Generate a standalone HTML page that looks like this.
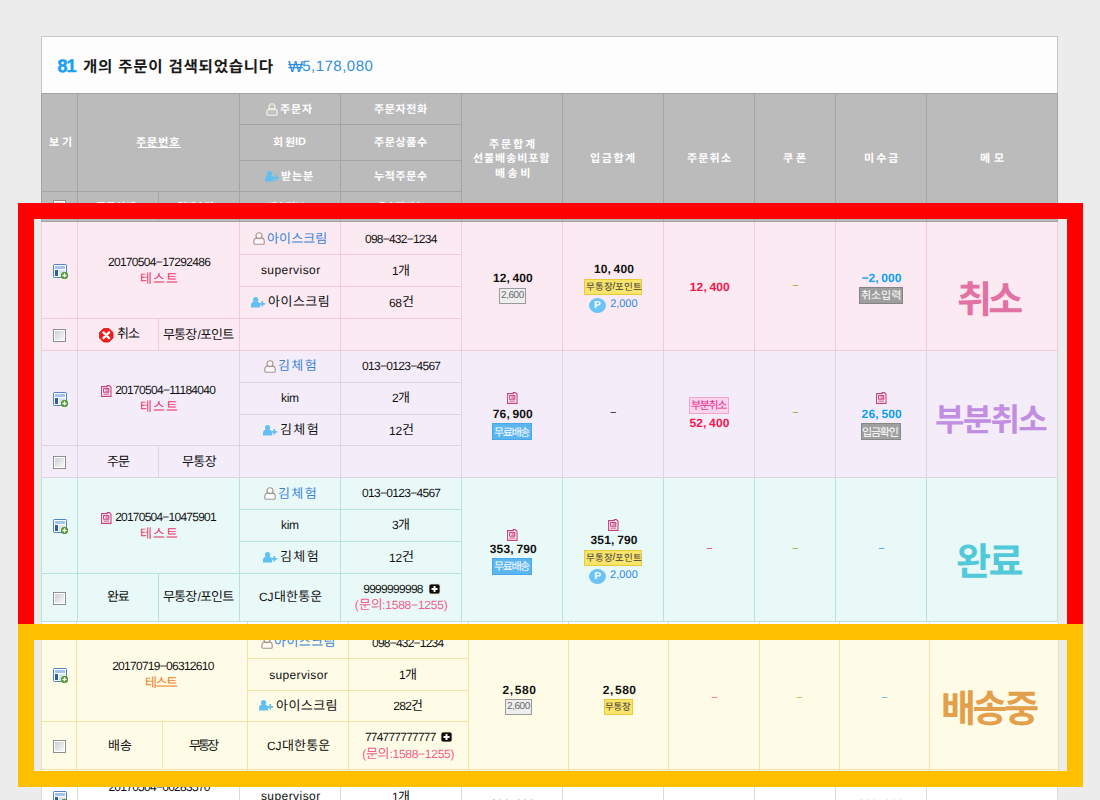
<!DOCTYPE html>
<html lang="ko"><head><meta charset="utf-8"><title>주문리스트</title>
<style>
html,body{margin:0;padding:0}
body{width:1100px;height:800px;overflow:hidden;background:#ececec;position:relative;font-family:"Liberation Sans",sans-serif;text-rendering:geometricPrecision}
.r,.t,.h,.cb,.pc,.fr,.clip{position:absolute}
.t{line-height:1;white-space:nowrap}
.t i{font-style:normal}
.h{overflow:visible}
svg.h text{font-family:"Liberation Sans","Noto Sans CJK KR","NanumGothic",sans-serif}
.cb{width:13px;height:13px;box-sizing:border-box;border:1px solid #8f8f8f;box-shadow:inset 0 0 0 1px #fff;background:linear-gradient(135deg,#ccd0d6 10%,#f6f6f6 85%)}
.pc{width:17px;height:15px;border-radius:50%;background:#6cc4f4;color:#fff;font-size:10px;font-weight:bold;line-height:15px;text-align:center}
.fr{box-sizing:border-box;border:16px solid}
.clip{overflow:hidden}
.clip>div{position:absolute}
</style></head>
<body>
<div id="shotA">
<div class="r" style="left:41px;top:36px;width:1017px;height:770px;background:#fdfdfd;box-sizing:border-box;border:1px solid #c6c6c6;border-bottom:0;"></div>
<span class="t" style="-webkit-text-stroke:.5px #1ba1f2;left:57.43px;top:57px;font-size:18px;color:#1ba1f2;letter-spacing:-0.95px;font-weight:bold;">81</span>
<svg class="h" style="left:82.59px;top:54.16px" width="192.23" height="22.4"><text x="0" y="17.6" font-size="15.6" font-weight="bold" fill="#1a1a1a" textLength="190.2" lengthAdjust="spacing">개의 주문이 검색되었습니다</text></svg>
<svg class="h" style="left:287.99px;top:52.89px" width="16.23" height="24.36"><text x="0" y="19.14" font-size="16" fill="#2f8fd8">₩</text></svg>
<span class="t" style="left:302.22px;top:59px;font-size:15px;color:#2f8fd8;letter-spacing:0.48px;">5,178,080</span>
<div class="r" style="left:41px;top:93px;width:1017px;height:129px;background:#bbbbbb;"></div>
<div class="r" style="left:41px;top:93px;width:1px;height:129px;background:#a4a4a4;"></div>
<div class="r" style="left:77px;top:93px;width:1px;height:129px;background:#a4a4a4;"></div>
<div class="r" style="left:239px;top:93px;width:1px;height:129px;background:#a4a4a4;"></div>
<div class="r" style="left:340px;top:93px;width:1px;height:129px;background:#a4a4a4;"></div>
<div class="r" style="left:461px;top:93px;width:1px;height:129px;background:#a4a4a4;"></div>
<div class="r" style="left:562px;top:93px;width:1px;height:129px;background:#a4a4a4;"></div>
<div class="r" style="left:663px;top:93px;width:1px;height:129px;background:#a4a4a4;"></div>
<div class="r" style="left:754px;top:93px;width:1px;height:129px;background:#a4a4a4;"></div>
<div class="r" style="left:835px;top:93px;width:1px;height:129px;background:#a4a4a4;"></div>
<div class="r" style="left:926px;top:93px;width:1px;height:129px;background:#a4a4a4;"></div>
<div class="r" style="left:1057px;top:93px;width:1px;height:129px;background:#a4a4a4;"></div>
<div class="r" style="left:41px;top:93px;width:1017px;height:1px;background:#a4a4a4;"></div>
<div class="r" style="left:41px;top:221px;width:1017px;height:1px;background:#a4a4a4;"></div>
<div class="r" style="left:239px;top:124px;width:222px;height:1px;background:#a4a4a4;"></div>
<div class="r" style="left:239px;top:160px;width:222px;height:1px;background:#a4a4a4;"></div>
<div class="r" style="left:41px;top:191px;width:420px;height:1px;background:#a4a4a4;"></div>
<div class="r" style="left:158px;top:191px;width:1px;height:31px;background:#a4a4a4;"></div>
<svg class="h" style="left:48.99px;top:132.94px" width="25.1" height="16.63"><text x="0" y="13.07" font-size="11" font-weight="bold" fill="#fff" textLength="23.1" lengthAdjust="spacing">보기</text></svg>
<svg class="h" style="left:136.48px;top:132.95px" width="45.37" height="16.63"><text x="0" y="13.07" font-size="11" font-weight="bold" fill="#fff" textLength="43.4" lengthAdjust="spacing">주문번호</text></svg>
<div class="r" style="left:137.5px;top:147px;width:43px;height:1px;background:#fff;"></div>
<svg class="h" style="left:266.3px;top:103.2px" width="12" height="13" viewBox="0 0 12 13"><path d="M.8 11.2V9.2a3.3 3.3 0 0 1 3.3-3.3h3.8a3.3 3.3 0 0 1 3.3 3.3v2a1 1 0 0 1-1 1H1.8a1 1 0 0 1-1-1z" fill="rgba(255,255,255,.12)" stroke="#f6f1e6" stroke-width="1.15"/><circle cx="6" cy="3.7" r="3" fill="rgba(255,255,255,.12)" stroke="#f6f1e6" stroke-width="1.15"/></svg>
<svg class="h" style="left:279.98px;top:100.39px" width="33.98" height="16.63"><text x="0" y="13.07" font-size="11" font-weight="bold" fill="#fff" textLength="32" lengthAdjust="spacing">주문자</text></svg>
<svg class="h" style="left:272.7px;top:132.8px" width="24.24" height="16.63"><text x="0" y="13.07" font-size="11" font-weight="bold" fill="#fff" textLength="22.2" lengthAdjust="spacing">회원</text></svg>
<span class="t" style="left:294.94px;top:137px;font-size:11px;color:#fff;letter-spacing:0.12px;font-weight:bold;">ID</span>
<svg class="h" style="left:265.2px;top:170.6px" width="15" height="11" viewBox="0 0 15 11"><circle cx="4.6" cy="2.7" r="2.6" fill="#62bff2"/><path d="M0 10.4V8.2a3.4 3.4 0 0 1 3.4-3.4h2.4a3.4 3.4 0 0 1 3.4 3.4v2.2z" fill="#62bff2"/><path d="M11.3 4v5.6M8.5 6.8h5.6" stroke="#62bff2" stroke-width="1.7"/></svg>
<svg class="h" style="left:281.11px;top:167.33px" width="34.1" height="16.63"><text x="0" y="13.07" font-size="11" font-weight="bold" fill="#fff" textLength="32.1" lengthAdjust="spacing">받는분</text></svg>
<svg class="h" style="left:373.98px;top:100.4px" width="55.03" height="16.63"><text x="0" y="13.07" font-size="11" font-weight="bold" fill="#fff" textLength="53" lengthAdjust="spacing">주문자전화</text></svg>
<svg class="h" style="left:373.98px;top:132.79px" width="55.16" height="16.63"><text x="0" y="13.07" font-size="11" font-weight="bold" fill="#fff" textLength="53.2" lengthAdjust="spacing">주문상품수</text></svg>
<svg class="h" style="left:373.99px;top:167.2px" width="55.15" height="16.63"><text x="0" y="13.07" font-size="11" font-weight="bold" fill="#fff" textLength="53.2" lengthAdjust="spacing">누적주문수</text></svg>
<svg class="h" style="left:488.98px;top:135.45px" width="48.03" height="16.63"><text x="0" y="13.07" font-size="11" font-weight="bold" fill="#fff" textLength="46" lengthAdjust="spacing">주문합계</text></svg>
<svg class="h" style="left:473.45px;top:149.45px" width="78.36" height="16.63"><text x="0" y="13.07" font-size="11" font-weight="bold" fill="#fff" textLength="76.4" lengthAdjust="spacing">선불배송비포함</text></svg>
<svg class="h" style="left:494.51px;top:163.7px" width="37.3" height="16.63"><text x="0" y="13.07" font-size="11" font-weight="bold" fill="#fff" textLength="35.3" lengthAdjust="spacing">배송비</text></svg>
<svg class="h" style="left:590.39px;top:149.2px" width="47.15" height="16.63"><text x="0" y="13.07" font-size="11" font-weight="bold" fill="#fff" textLength="45.2" lengthAdjust="spacing">입금합계</text></svg>
<svg class="h" style="left:686.98px;top:149.2px" width="46.04" height="16.63"><text x="0" y="13.07" font-size="11" font-weight="bold" fill="#fff" textLength="44" lengthAdjust="spacing">주문취소</text></svg>
<svg class="h" style="left:782.99px;top:149.04px" width="25.24" height="16.63"><text x="0" y="13.07" font-size="11" font-weight="bold" fill="#fff" textLength="23.2" lengthAdjust="spacing">쿠폰</text></svg>
<svg class="h" style="left:864.11px;top:149.2px" width="36.35" height="16.63"><text x="0" y="13.07" font-size="11" font-weight="bold" fill="#fff" textLength="34.4" lengthAdjust="spacing">미수금</text></svg>
<svg class="h" style="left:979.91px;top:149.2px" width="26.21" height="16.63"><text x="0" y="13.07" font-size="11" font-weight="bold" fill="#fff" textLength="24.2" lengthAdjust="spacing">메모</text></svg>
<div class="cb" style="left:53px;top:200px"></div>
<svg class="h" style="left:95.98px;top:197.58px" width="41.69" height="16.63"><text x="0" y="13.07" font-size="11" font-weight="bold" fill="#fff" textLength="39.7" lengthAdjust="spacing">주문상태</text></svg>
<svg class="h" style="left:176.87px;top:197.6px" width="39.37" height="16.63"><text x="0" y="13.07" font-size="11" font-weight="bold" fill="#fff" textLength="37.4" lengthAdjust="spacing">결제수단</text></svg>
<svg class="h" style="left:266.51px;top:197.6px" width="40" height="16.63"><text x="0" y="13.07" font-size="11" font-weight="bold" fill="#fff" textLength="38" lengthAdjust="spacing">배송정보</text></svg>
<svg class="h" style="left:376.99px;top:197.6px" width="48.27" height="16.63"><text x="0" y="13.07" font-size="11" font-weight="bold" fill="#fff" textLength="46.3" lengthAdjust="spacing">운송장번호</text></svg>
<div class="r" style="left:41px;top:222px;width:1017px;height:129px;background:#fceaf2;"></div>
<div class="r" style="left:41px;top:222px;width:1px;height:129px;background:#f1cbd9;"></div>
<div class="r" style="left:77px;top:222px;width:1px;height:129px;background:#f1cbd9;"></div>
<div class="r" style="left:239px;top:222px;width:1px;height:129px;background:#f1cbd9;"></div>
<div class="r" style="left:340px;top:222px;width:1px;height:129px;background:#f1cbd9;"></div>
<div class="r" style="left:461px;top:222px;width:1px;height:129px;background:#f1cbd9;"></div>
<div class="r" style="left:562px;top:222px;width:1px;height:129px;background:#f1cbd9;"></div>
<div class="r" style="left:663px;top:222px;width:1px;height:129px;background:#f1cbd9;"></div>
<div class="r" style="left:754px;top:222px;width:1px;height:129px;background:#f1cbd9;"></div>
<div class="r" style="left:835px;top:222px;width:1px;height:129px;background:#f1cbd9;"></div>
<div class="r" style="left:926px;top:222px;width:1px;height:129px;background:#f1cbd9;"></div>
<div class="r" style="left:1057px;top:222px;width:1px;height:129px;background:#f1cbd9;"></div>
<div class="r" style="left:158px;top:318px;width:1px;height:32px;background:#f1cbd9;"></div>
<div class="r" style="left:239px;top:254px;width:222px;height:1px;background:#f1cbd9;"></div>
<div class="r" style="left:239px;top:286px;width:222px;height:1px;background:#f1cbd9;"></div>
<div class="r" style="left:41px;top:318px;width:420px;height:1px;background:#f1cbd9;"></div>
<div class="r" style="left:41px;top:350px;width:1017px;height:1px;background:#f1cbd9;"></div>
<svg class="h" style="left:53px;top:264px" width="16" height="16" viewBox="0 0 16 16"><rect x=".5" y=".5" width="13" height="13" rx=".8" fill="#fff" stroke="#4f82c9"/><rect x="2" y="2" width="10" height="3" fill="#9fc5ef"/><rect x="2" y="6" width="3" height="6" fill="#2c5eac"/><rect x="6" y="6" width="6" height="6" fill="#dde4f0"/><circle cx="11.5" cy="11.4" r="3.5" fill="#3d8c1c"/><circle cx="11.5" cy="11.4" r="3.1" fill="none" stroke="#5aa632" stroke-width=".6"/><path d="M11.5 9.2v4.4M9.3 11.4h4.4" stroke="#fff" stroke-width="1.5"/></svg>
<span class="t" style="left:107.9px;top:256px;font-size:12px;color:#111;letter-spacing:-0.68px;">20170504−17292486</span>
<svg class="h" style="left:139.87px;top:268.18px" width="39.85" height="19.49"><text x="0" y="15.31" font-size="13" fill="#ea3a6e" textLength="37.85" lengthAdjust="spacing">테스트</text></svg>
<div class="cb" style="left:53px;top:329px"></div>
<svg class="h" style="left:98.5px;top:327.5px" width="14.5" height="14.5" viewBox="0 0 15 15"><path d="M4.7.5h5.6l4.2 4.2v5.6l-4.2 4.2H4.7L.5 10.3V4.7z" fill="#f21c1c" stroke="#e01010" stroke-width=".8"/><path d="M4.6 4.6l5.8 5.8M10.4 4.6l-5.8 5.8" stroke="#fff" stroke-width="2.5" stroke-linecap="round"/></svg>
<svg class="h" style="left:116.72px;top:323.08px" width="24.97" height="19.49"><text x="0" y="15.31" font-size="13" fill="#111" textLength="23" lengthAdjust="spacing">취소</text></svg>
<svg class="h" style="left:163.39px;top:323.67px" width="36.19" height="19.49"><text x="0" y="15.31" font-size="13" fill="#111" textLength="34.2" lengthAdjust="spacing">무통장</text></svg>
<span class="t" style="left:197.58px;top:329px;font-size:12px;color:#111;letter-spacing:-0.6px;">/</span>
<svg class="h" style="left:200.31px;top:323.67px" width="36.19" height="19.49"><text x="0" y="15.31" font-size="13" fill="#111" textLength="34.2" lengthAdjust="spacing">포인트</text></svg>
<svg class="h" style="left:253.3px;top:232.3px" width="12" height="13" viewBox="0 0 12 13"><path d="M.8 11.2V9.2a3.3 3.3 0 0 1 3.3-3.3h3.8a3.3 3.3 0 0 1 3.3 3.3v2a1 1 0 0 1-1 1H1.8a1 1 0 0 1-1-1z" fill="rgba(255,255,255,.6)" stroke="#a8958a" stroke-width="1.15"/><circle cx="6" cy="3.7" r="3" fill="rgba(255,255,255,.6)" stroke="#a8958a" stroke-width="1.15"/></svg>
<svg class="h" style="left:267.21px;top:228.18px" width="62.27" height="19.49"><text x="0" y="15.31" font-size="13" fill="#3a84d8" textLength="60.3" lengthAdjust="spacing">아이스크림</text></svg>
<span class="t" style="left:260.92px;top:264px;font-size:12px;color:#111;letter-spacing:0.44px;">supervisor</span>
<svg class="h" style="left:250.8px;top:296.5px" width="15" height="11" viewBox="0 0 15 11"><circle cx="4.6" cy="2.7" r="2.6" fill="#62bff2"/><path d="M0 10.4V8.2a3.4 3.4 0 0 1 3.4-3.4h2.4a3.4 3.4 0 0 1 3.4 3.4v2.2z" fill="#62bff2"/><path d="M11.3 4v5.6M8.5 6.8h5.6" stroke="#62bff2" stroke-width="1.7"/></svg>
<svg class="h" style="left:268.01px;top:291.18px" width="63.77" height="19.49"><text x="0" y="15.31" font-size="13" fill="#111" textLength="61.8" lengthAdjust="spacing">아이스크림</text></svg>
<span class="t" style="left:365.03px;top:233px;font-size:12px;color:#111;letter-spacing:-0.77px;">098−432−1234</span>
<span class="t" style="left:392.09px;top:265px;font-size:12px;color:#111;letter-spacing:-0.85px;">1</span>
<svg class="h" style="left:397.91px;top:259.68px" width="13.15" height="19.49"><text x="0" y="15.31" font-size="13" fill="#111">개</text></svg>
<span class="t" style="left:388.89px;top:297px;font-size:12px;color:#111;letter-spacing:-0.18px;">68</span>
<svg class="h" style="left:401.88px;top:291.34px" width="13.82" height="19.49"><text x="0" y="15.31" font-size="13" fill="#111">건</text></svg>
<span class="t" style="left:492.94px;top:272px;font-size:12px;color:#111;letter-spacing:0.09px;font-weight:bold;">12<i style="margin-right:2.6px">,</i>400</span>
<div class="r" style="left:499px;top:288px;width:27px;height:16px;background:#eeeeee;box-sizing:border-box;border:1px solid #9a9a9a;"></div>
<span class="t" style="left:501.1px;top:291px;font-size:10px;color:#6a6a6a;letter-spacing:-0.48px;">2,600</span>
<span class="t" style="left:593.89px;top:263px;font-size:12px;color:#111;letter-spacing:0.14px;font-weight:bold;">10<i style="margin-right:2.6px">,</i>400</span>
<div class="r" style="left:584px;top:279px;width:58px;height:16px;background:#f9e46c;box-sizing:border-box;border:1px solid #e9ca3a;"></div>
<svg class="h" style="left:585.72px;top:280.26px" width="28.69" height="12.77"><text x="0" y="10.03" font-size="9.5" fill="#3a3a3a" textLength="26.7" lengthAdjust="spacing">무통장</text></svg>
<span class="t" style="left:612.41px;top:282px;font-size:10px;color:#3a3a3a;letter-spacing:-0.6px;">/</span>
<svg class="h" style="left:614.58px;top:280.26px" width="28.69" height="12.77"><text x="0" y="10.03" font-size="9.5" fill="#3a3a3a" textLength="26.7" lengthAdjust="spacing">포인트</text></svg>
<div class="pc" style="left:588.9px;top:297.9px">P</div>
<span class="t" style="left:610.35px;top:299px;font-size:11px;color:#2a8ae0;letter-spacing:-0.09px;">2,000</span>
<span class="t" style="left:689.74px;top:281px;font-size:12px;color:#f5164a;letter-spacing:0.14px;font-weight:bold;">12<i style="margin-right:2.6px">,</i>400</span>
<span class="t" style="left:792.29px;top:281px;font-size:11px;color:#8fae1b;">−</span>
<span class="t" style="left:861.4px;top:272px;font-size:12px;color:#0a9ff5;letter-spacing:0.09px;font-weight:bold;">−2<i style="margin-right:2.6px">,</i>000</span>
<div class="r" style="left:859px;top:287px;width:44px;height:17px;background:#9e9e9e;box-sizing:border-box;border:1px solid #858585;"></div>
<svg class="h" style="left:860.8px;top:286.2px" width="42.32" height="16.63"><text x="0" y="13.07" font-size="11" fill="#fff" textLength="40.3" lengthAdjust="spacing">취소입력</text></svg>
<svg class="h" style="left:957.17px;top:267.57px" width="68.28" height="57.07"><text x="0" y="44.84" font-size="38" font-weight="bold" fill="#e272a4" textLength="66.3" lengthAdjust="spacing">취소</text></svg>
<div class="r" style="left:41px;top:351px;width:1017px;height:127px;background:#f4edf9;"></div>
<div class="r" style="left:41px;top:351px;width:1px;height:127px;background:#ddd3e3;"></div>
<div class="r" style="left:77px;top:351px;width:1px;height:127px;background:#ddd3e3;"></div>
<div class="r" style="left:239px;top:351px;width:1px;height:127px;background:#ddd3e3;"></div>
<div class="r" style="left:340px;top:351px;width:1px;height:127px;background:#ddd3e3;"></div>
<div class="r" style="left:461px;top:351px;width:1px;height:127px;background:#ddd3e3;"></div>
<div class="r" style="left:562px;top:351px;width:1px;height:127px;background:#ddd3e3;"></div>
<div class="r" style="left:663px;top:351px;width:1px;height:127px;background:#ddd3e3;"></div>
<div class="r" style="left:754px;top:351px;width:1px;height:127px;background:#ddd3e3;"></div>
<div class="r" style="left:835px;top:351px;width:1px;height:127px;background:#ddd3e3;"></div>
<div class="r" style="left:926px;top:351px;width:1px;height:127px;background:#ddd3e3;"></div>
<div class="r" style="left:1057px;top:351px;width:1px;height:127px;background:#ddd3e3;"></div>
<div class="r" style="left:158px;top:445px;width:1px;height:32px;background:#ddd3e3;"></div>
<div class="r" style="left:239px;top:382px;width:222px;height:1px;background:#ddd3e3;"></div>
<div class="r" style="left:239px;top:414px;width:222px;height:1px;background:#ddd3e3;"></div>
<div class="r" style="left:41px;top:445px;width:420px;height:1px;background:#ddd3e3;"></div>
<div class="r" style="left:41px;top:477px;width:1017px;height:1px;background:#ddd3e3;"></div>
<svg class="h" style="left:53px;top:391.75px" width="16" height="16" viewBox="0 0 16 16"><rect x=".5" y=".5" width="13" height="13" rx=".8" fill="#fff" stroke="#4f82c9"/><rect x="2" y="2" width="10" height="3" fill="#9fc5ef"/><rect x="2" y="6" width="3" height="6" fill="#2c5eac"/><rect x="6" y="6" width="6" height="6" fill="#dde4f0"/><circle cx="11.5" cy="11.4" r="3.5" fill="#3d8c1c"/><circle cx="11.5" cy="11.4" r="3.1" fill="none" stroke="#5aa632" stroke-width=".6"/><path d="M11.5 9.2v4.4M9.3 11.4h4.4" stroke="#fff" stroke-width="1.5"/></svg>
<svg class="h" style="left:100.5px;top:385px" width="11" height="12" viewBox="0 0 11 12"><path d="M.6 1.6h5.6v-1h2.2l1.6 1.7v9.1H.6z" fill="#fff" stroke="#c7407f" stroke-width="1.1"/><rect x="2.6" y="3.6" width="5.3" height="3.6" fill="#ea93bb" stroke="#c7407f" stroke-width="1"/><rect x="3.2" y="4.2" width="1.1" height="2.4" fill="#fff"/><path d="M2.4 9.1h5.8" stroke="#c7407f" stroke-width="1"/></svg>
<span class="t" style="left:115.15px;top:384px;font-size:12px;color:#111;letter-spacing:-0.7px;">20170504−11184040</span>
<svg class="h" style="left:139.87px;top:395.93px" width="39.85" height="19.49"><text x="0" y="15.31" font-size="13" fill="#ea3a6e" textLength="37.85" lengthAdjust="spacing">테스트</text></svg>
<div class="cb" style="left:53px;top:456.25px"></div>
<svg class="h" style="left:106.64px;top:450.55px" width="24.93" height="19.49"><text x="0" y="15.31" font-size="13" fill="#111" textLength="22.9" lengthAdjust="spacing">주문</text></svg>
<svg class="h" style="left:182.39px;top:450.67px" width="36.65" height="19.49"><text x="0" y="15.31" font-size="13" fill="#111" textLength="34.7" lengthAdjust="spacing">무통장</text></svg>
<svg class="h" style="left:264.2px;top:359.8px" width="12" height="13" viewBox="0 0 12 13"><path d="M.8 11.2V9.2a3.3 3.3 0 0 1 3.3-3.3h3.8a3.3 3.3 0 0 1 3.3 3.3v2a1 1 0 0 1-1 1H1.8a1 1 0 0 1-1-1z" fill="rgba(255,255,255,.6)" stroke="#a8958a" stroke-width="1.15"/><circle cx="6" cy="3.7" r="3" fill="rgba(255,255,255,.6)" stroke="#a8958a" stroke-width="1.15"/></svg>
<svg class="h" style="left:278.27px;top:355.18px" width="40.56" height="19.49"><text x="0" y="15.31" font-size="13" fill="#3a84d8" textLength="38.6" lengthAdjust="spacing">김체험</text></svg>
<span class="t" style="left:280.94px;top:392px;font-size:12px;color:#111;letter-spacing:-0.28px;">kim</span>
<svg class="h" style="left:262.8px;top:424.5px" width="15" height="11" viewBox="0 0 15 11"><circle cx="4.6" cy="2.7" r="2.6" fill="#62bff2"/><path d="M0 10.4V8.2a3.4 3.4 0 0 1 3.4-3.4h2.4a3.4 3.4 0 0 1 3.4 3.4v2.2z" fill="#62bff2"/><path d="M11.3 4v5.6M8.5 6.8h5.6" stroke="#62bff2" stroke-width="1.7"/></svg>
<svg class="h" style="left:280.02px;top:419.18px" width="40.56" height="19.49"><text x="0" y="15.31" font-size="13" fill="#111" textLength="38.6" lengthAdjust="spacing">김체험</text></svg>
<span class="t" style="left:362.03px;top:360px;font-size:12px;color:#111;letter-spacing:-0.7px;">013−0123−4567</span>
<span class="t" style="left:391.9px;top:392px;font-size:12px;color:#111;letter-spacing:-0.41px;">2</span>
<svg class="h" style="left:398.16px;top:387.18px" width="13.59" height="19.49"><text x="0" y="15.31" font-size="13" fill="#111">개</text></svg>
<span class="t" style="left:389.09px;top:425px;font-size:12px;color:#111;letter-spacing:-0.28px;">12</span>
<svg class="h" style="left:401.88px;top:419.34px" width="13.72" height="19.49"><text x="0" y="15.31" font-size="13" fill="#111">건</text></svg>
<svg class="h" style="left:507px;top:392px" width="11" height="12" viewBox="0 0 11 12"><path d="M.6 1.6h5.6v-1h2.2l1.6 1.7v9.1H.6z" fill="#fff" stroke="#c7407f" stroke-width="1.1"/><rect x="2.6" y="3.6" width="5.3" height="3.6" fill="#ea93bb" stroke="#c7407f" stroke-width="1"/><rect x="3.2" y="4.2" width="1.1" height="2.4" fill="#fff"/><path d="M2.4 9.1h5.8" stroke="#c7407f" stroke-width="1"/></svg>
<span class="t" style="left:492.73px;top:408px;font-size:12px;color:#111;letter-spacing:0.15px;font-weight:bold;">76<i style="margin-right:2.6px">,</i>900</span>
<div class="r" style="left:492px;top:423px;width:40px;height:17px;background:#5bb5ee;box-sizing:border-box;border:1px solid #4ca9e9;"></div>
<svg class="h" style="left:493.73px;top:422.5px" width="38.24" height="16.63"><text x="0" y="13.07" font-size="11" fill="#fff" textLength="36.2" lengthAdjust="spacing">무료배송</text></svg>
<span class="t" style="left:610.04px;top:408px;font-size:11px;color:#111;">−</span>
<div class="r" style="left:689px;top:397px;width:40px;height:17px;background:#fad4ea;box-sizing:border-box;border:1px solid #f4a2cf;"></div>
<svg class="h" style="left:690.78px;top:396.2px" width="38.44" height="16.63"><text x="0" y="13.07" font-size="11" fill="#dc2f96" textLength="36.4" lengthAdjust="spacing">부분취소</text></svg>
<span class="t" style="left:689.43px;top:417px;font-size:12px;color:#f5164a;letter-spacing:0.13px;font-weight:bold;">52<i style="margin-right:2.6px">,</i>400</span>
<span class="t" style="left:792.29px;top:408px;font-size:11px;color:#8fae1b;">−</span>
<svg class="h" style="left:876.3px;top:392px" width="11" height="12" viewBox="0 0 11 12"><path d="M.6 1.6h5.6v-1h2.2l1.6 1.7v9.1H.6z" fill="#fff" stroke="#c7407f" stroke-width="1.1"/><rect x="2.6" y="3.6" width="5.3" height="3.6" fill="#ea93bb" stroke="#c7407f" stroke-width="1"/><rect x="3.2" y="4.2" width="1.1" height="2.4" fill="#fff"/><path d="M2.4 9.1h5.8" stroke="#c7407f" stroke-width="1"/></svg>
<span class="t" style="left:861.58px;top:408px;font-size:12px;color:#0a9ff5;letter-spacing:0.17px;font-weight:bold;">26<i style="margin-right:2.6px">,</i>500</span>
<div class="r" style="left:861px;top:423px;width:40px;height:17px;background:#a0a0a0;box-sizing:border-box;border:1px solid #888888;"></div>
<svg class="h" style="left:862.14px;top:422.7px" width="38.78" height="16.63"><text x="0" y="13.07" font-size="11" fill="#fff" textLength="36.8" lengthAdjust="spacing">입금확인</text></svg>
<svg class="h" style="left:935.49px;top:393.03px" width="114.73" height="47.95"><text x="0" y="37.68" font-size="32" font-weight="bold" fill="#c28ee2" textLength="112.7" lengthAdjust="spacing">부분취소</text></svg>
<div class="r" style="left:41px;top:478px;width:1017px;height:144px;background:#e9f9f8;"></div>
<div class="r" style="left:41px;top:478px;width:1px;height:144px;background:#b7e1de;"></div>
<div class="r" style="left:77px;top:478px;width:1px;height:144px;background:#b7e1de;"></div>
<div class="r" style="left:239px;top:478px;width:1px;height:144px;background:#b7e1de;"></div>
<div class="r" style="left:340px;top:478px;width:1px;height:144px;background:#b7e1de;"></div>
<div class="r" style="left:461px;top:478px;width:1px;height:144px;background:#b7e1de;"></div>
<div class="r" style="left:562px;top:478px;width:1px;height:144px;background:#b7e1de;"></div>
<div class="r" style="left:663px;top:478px;width:1px;height:144px;background:#b7e1de;"></div>
<div class="r" style="left:754px;top:478px;width:1px;height:144px;background:#b7e1de;"></div>
<div class="r" style="left:835px;top:478px;width:1px;height:144px;background:#b7e1de;"></div>
<div class="r" style="left:926px;top:478px;width:1px;height:144px;background:#b7e1de;"></div>
<div class="r" style="left:1057px;top:478px;width:1px;height:144px;background:#b7e1de;"></div>
<div class="r" style="left:158px;top:573px;width:1px;height:48px;background:#b7e1de;"></div>
<div class="r" style="left:239px;top:509px;width:222px;height:1px;background:#b7e1de;"></div>
<div class="r" style="left:239px;top:541px;width:222px;height:1px;background:#b7e1de;"></div>
<div class="r" style="left:41px;top:573px;width:420px;height:1px;background:#b7e1de;"></div>
<div class="r" style="left:41px;top:621px;width:1017px;height:1px;background:#b7e1de;"></div>
<svg class="h" style="left:53px;top:518.75px" width="16" height="16" viewBox="0 0 16 16"><rect x=".5" y=".5" width="13" height="13" rx=".8" fill="#fff" stroke="#4f82c9"/><rect x="2" y="2" width="10" height="3" fill="#9fc5ef"/><rect x="2" y="6" width="3" height="6" fill="#2c5eac"/><rect x="6" y="6" width="6" height="6" fill="#dde4f0"/><circle cx="11.5" cy="11.4" r="3.5" fill="#3d8c1c"/><circle cx="11.5" cy="11.4" r="3.1" fill="none" stroke="#5aa632" stroke-width=".6"/><path d="M11.5 9.2v4.4M9.3 11.4h4.4" stroke="#fff" stroke-width="1.5"/></svg>
<svg class="h" style="left:100.5px;top:512px" width="11" height="12" viewBox="0 0 11 12"><path d="M.6 1.6h5.6v-1h2.2l1.6 1.7v9.1H.6z" fill="#fff" stroke="#c7407f" stroke-width="1.1"/><rect x="2.6" y="3.6" width="5.3" height="3.6" fill="#ea93bb" stroke="#c7407f" stroke-width="1"/><rect x="3.2" y="4.2" width="1.1" height="2.4" fill="#fff"/><path d="M2.4 9.1h5.8" stroke="#c7407f" stroke-width="1"/></svg>
<span class="t" style="left:115.15px;top:511px;font-size:12px;color:#111;letter-spacing:-0.77px;">20170504−10475901</span>
<svg class="h" style="left:139.87px;top:522.93px" width="39.85" height="19.49"><text x="0" y="15.31" font-size="13" fill="#ea3a6e" textLength="37.85" lengthAdjust="spacing">테스트</text></svg>
<div class="cb" style="left:53px;top:592px"></div>
<svg class="h" style="left:106.77px;top:586.09px" width="24.67" height="19.49"><text x="0" y="15.31" font-size="13" fill="#111" textLength="22.7" lengthAdjust="spacing">완료</text></svg>
<svg class="h" style="left:163.39px;top:585.92px" width="36.19" height="19.49"><text x="0" y="15.31" font-size="13" fill="#111" textLength="34.2" lengthAdjust="spacing">무통장</text></svg>
<span class="t" style="left:197.58px;top:591px;font-size:12px;color:#111;letter-spacing:-0.6px;">/</span>
<svg class="h" style="left:200.31px;top:585.92px" width="36.19" height="19.49"><text x="0" y="15.31" font-size="13" fill="#111" textLength="34.2" lengthAdjust="spacing">포인트</text></svg>
<svg class="h" style="left:264.2px;top:487px" width="12" height="13" viewBox="0 0 12 13"><path d="M.8 11.2V9.2a3.3 3.3 0 0 1 3.3-3.3h3.8a3.3 3.3 0 0 1 3.3 3.3v2a1 1 0 0 1-1 1H1.8a1 1 0 0 1-1-1z" fill="rgba(255,255,255,.6)" stroke="#a8958a" stroke-width="1.15"/><circle cx="6" cy="3.7" r="3" fill="rgba(255,255,255,.6)" stroke="#a8958a" stroke-width="1.15"/></svg>
<svg class="h" style="left:278.27px;top:482.93px" width="40.56" height="19.49"><text x="0" y="15.31" font-size="13" fill="#3a84d8" textLength="38.6" lengthAdjust="spacing">김체험</text></svg>
<span class="t" style="left:280.94px;top:519px;font-size:12px;color:#111;letter-spacing:-0.28px;">kim</span>
<svg class="h" style="left:262.8px;top:551.5px" width="15" height="11" viewBox="0 0 15 11"><circle cx="4.6" cy="2.7" r="2.6" fill="#62bff2"/><path d="M0 10.4V8.2a3.4 3.4 0 0 1 3.4-3.4h2.4a3.4 3.4 0 0 1 3.4 3.4v2.2z" fill="#62bff2"/><path d="M11.3 4v5.6M8.5 6.8h5.6" stroke="#62bff2" stroke-width="1.7"/></svg>
<svg class="h" style="left:280.02px;top:546.18px" width="40.56" height="19.49"><text x="0" y="15.31" font-size="13" fill="#111" textLength="38.6" lengthAdjust="spacing">김체험</text></svg>
<span class="t" style="left:362.03px;top:487px;font-size:12px;color:#111;letter-spacing:-0.7px;">013−0123−4567</span>
<span class="t" style="left:392.04px;top:519px;font-size:12px;color:#111;letter-spacing:-0.56px;">3</span>
<svg class="h" style="left:398.16px;top:514.18px" width="13.44" height="19.49"><text x="0" y="15.31" font-size="13" fill="#111">개</text></svg>
<span class="t" style="left:389.09px;top:552px;font-size:12px;color:#111;letter-spacing:-0.28px;">12</span>
<svg class="h" style="left:401.88px;top:546.34px" width="13.72" height="19.49"><text x="0" y="15.31" font-size="13" fill="#111">건</text></svg>
<span class="t" style="left:258.89px;top:591px;font-size:12px;color:#111;letter-spacing:0.06px;">CJ</span>
<svg class="h" style="left:273.67px;top:585.67px" width="50.24" height="19.49"><text x="0" y="15.31" font-size="13" fill="#111" textLength="48.2" lengthAdjust="spacing">대한통운</text></svg>
<span class="t" style="left:363.19px;top:583px;font-size:12px;color:#111;letter-spacing:-0.71px;">9999999998</span>
<svg class="h" style="left:428.75px;top:584px" width="11" height="10" viewBox="0 0 11 10"><rect x=".2" y=".2" width="10.6" height="9.6" rx="2" fill="#0d0d0d" stroke="#d8b88a" stroke-width=".4"/><path d="M5.5 2v6M2.5 5h6" stroke="#fff" stroke-width="2"/></svg>
<span class="t" style="left:354.76px;top:599px;font-size:12px;color:#f0608c;letter-spacing:-0.21px;">(</span>
<svg class="h" style="left:358.54px;top:593.79px" width="25.58" height="19.49"><text x="0" y="15.31" font-size="13" fill="#f0608c" textLength="23.6" lengthAdjust="spacing">문의</text></svg>
<span class="t" style="left:382.12px;top:599px;font-size:12px;color:#f0608c;letter-spacing:-0.21px;">:1588−1255)</span>
<svg class="h" style="left:507px;top:528.75px" width="11" height="12" viewBox="0 0 11 12"><path d="M.6 1.6h5.6v-1h2.2l1.6 1.7v9.1H.6z" fill="#fff" stroke="#c7407f" stroke-width="1.1"/><rect x="2.6" y="3.6" width="5.3" height="3.6" fill="#ea93bb" stroke="#c7407f" stroke-width="1"/><rect x="3.2" y="4.2" width="1.1" height="2.4" fill="#fff"/><path d="M2.4 9.1h5.8" stroke="#c7407f" stroke-width="1"/></svg>
<span class="t" style="left:489.72px;top:543px;font-size:12px;color:#111;letter-spacing:0.17px;font-weight:bold;">353<i style="margin-right:2.6px">,</i>790</span>
<div class="r" style="left:492px;top:557.75px;width:40px;height:17px;background:#5bb5ee;box-sizing:border-box;border:1px solid #4ca9e9;"></div>
<svg class="h" style="left:493.73px;top:557.2px" width="38.24" height="16.63"><text x="0" y="13.07" font-size="11" fill="#fff" textLength="36.2" lengthAdjust="spacing">무료배송</text></svg>
<svg class="h" style="left:608px;top:519px" width="11" height="12" viewBox="0 0 11 12"><path d="M.6 1.6h5.6v-1h2.2l1.6 1.7v9.1H.6z" fill="#fff" stroke="#c7407f" stroke-width="1.1"/><rect x="2.6" y="3.6" width="5.3" height="3.6" fill="#ea93bb" stroke="#c7407f" stroke-width="1"/><rect x="3.2" y="4.2" width="1.1" height="2.4" fill="#fff"/><path d="M2.4 9.1h5.8" stroke="#c7407f" stroke-width="1"/></svg>
<span class="t" style="left:590.47px;top:534px;font-size:12px;color:#111;letter-spacing:0.17px;font-weight:bold;">351<i style="margin-right:2.6px">,</i>790</span>
<div class="r" style="left:584px;top:550px;width:58px;height:16px;background:#f9e46c;box-sizing:border-box;border:1px solid #e9ca3a;"></div>
<svg class="h" style="left:585.72px;top:551.26px" width="28.69" height="12.77"><text x="0" y="10.03" font-size="9.5" fill="#3a3a3a" textLength="26.7" lengthAdjust="spacing">무통장</text></svg>
<span class="t" style="left:612.41px;top:553px;font-size:10px;color:#3a3a3a;letter-spacing:-0.6px;">/</span>
<svg class="h" style="left:614.58px;top:551.26px" width="28.69" height="12.77"><text x="0" y="10.03" font-size="9.5" fill="#3a3a3a" textLength="26.7" lengthAdjust="spacing">포인트</text></svg>
<div class="pc" style="left:589.1px;top:568.75px">P</div>
<span class="t" style="left:609.95px;top:570px;font-size:11px;color:#2a8ae0;letter-spacing:0.11px;">2,000</span>
<span class="t" style="left:706.29px;top:544px;font-size:11px;color:#f0306a;">−</span>
<span class="t" style="left:792.29px;top:544px;font-size:11px;color:#8fae1b;">−</span>
<span class="t" style="left:878.29px;top:544px;font-size:11px;color:#2aa2ea;">−</span>
<svg class="h" style="left:956.24px;top:531.07px" width="69.53" height="56.06"><text x="0" y="44.05" font-size="38" font-weight="bold" fill="#52c9d8" textLength="67.5" lengthAdjust="spacing">완료</text></svg>
<div class="r" style="left:41px;top:622px;width:1017px;height:180px;background:#ffffff;"></div>
<div class="r" style="left:41px;top:622px;width:1px;height:178px;background:#dadada;"></div>
<div class="r" style="left:77px;top:622px;width:1px;height:178px;background:#dadada;"></div>
<div class="r" style="left:239px;top:622px;width:1px;height:178px;background:#dadada;"></div>
<div class="r" style="left:340px;top:622px;width:1px;height:178px;background:#dadada;"></div>
<div class="r" style="left:461px;top:622px;width:1px;height:178px;background:#dadada;"></div>
<div class="r" style="left:562px;top:622px;width:1px;height:178px;background:#dadada;"></div>
<div class="r" style="left:663px;top:622px;width:1px;height:178px;background:#dadada;"></div>
<div class="r" style="left:754px;top:622px;width:1px;height:178px;background:#dadada;"></div>
<div class="r" style="left:835px;top:622px;width:1px;height:178px;background:#dadada;"></div>
<div class="r" style="left:926px;top:622px;width:1px;height:178px;background:#dadada;"></div>
<div class="r" style="left:1057px;top:622px;width:1px;height:178px;background:#dadada;"></div>
<svg class="h" style="left:53px;top:791.3px" width="16" height="16" viewBox="0 0 16 16"><rect x=".5" y=".5" width="13" height="13" rx=".8" fill="#fff" stroke="#4f82c9"/><rect x="2" y="2" width="10" height="3" fill="#9fc5ef"/><rect x="2" y="6" width="3" height="6" fill="#2c5eac"/><rect x="6" y="6" width="6" height="6" fill="#dde4f0"/><circle cx="11.5" cy="11.4" r="3.5" fill="#3d8c1c"/><circle cx="11.5" cy="11.4" r="3.1" fill="none" stroke="#5aa632" stroke-width=".6"/><path d="M11.5 9.2v4.4M9.3 11.4h4.4" stroke="#fff" stroke-width="1.5"/></svg>
<span class="t" style="left:108.4px;top:781px;font-size:12px;color:#111;letter-spacing:-0.73px;">20170504−00283570</span>
<svg class="h" style="left:139.87px;top:795.68px" width="39.85" height="19.49"><text x="0" y="15.31" font-size="13" fill="#ea3a6e" textLength="37.85" lengthAdjust="spacing">테스트</text></svg>
<span class="t" style="left:260.92px;top:790px;font-size:12px;color:#111;letter-spacing:0.44px;">supervisor</span>
<span class="t" style="left:392.09px;top:791px;font-size:12px;color:#111;letter-spacing:-0.85px;">1</span>
<svg class="h" style="left:397.91px;top:786.18px" width="13.15" height="19.49"><text x="0" y="15.31" font-size="13" fill="#111">개</text></svg>
<span class="t" style="left:490.24px;top:798px;font-size:12px;color:#111;letter-spacing:-0.2px;font-weight:bold;">100<i style="margin-right:2.6px">,</i>000</span>
<span class="t" style="left:857.24px;top:798px;font-size:12px;color:#0a9ff5;letter-spacing:0.15px;font-weight:bold;">100<i style="margin-right:2.6px">,</i>000</span>
</div>
<div class="fr" style="left:18px;top:203px;width:1065px;height:440px;border-color:#ff0000;border-bottom:0"></div>
<div class="clip" style="left:34px;top:622px;width:1033px;height:149px"><div style="left:-34px;top:-622px">
<div class="r" style="left:34px;top:600px;width:1033px;height:200px;background:#ececec;"></div>
<div class="r" style="left:41px;top:600px;width:1018px;height:26px;background:#ffffff;"></div>
<div class="r" style="left:41px;top:600px;width:1px;height:26px;background:#dadada;"></div>
<div class="r" style="left:76px;top:600px;width:1px;height:26px;background:#dadada;"></div>
<div class="r" style="left:247px;top:600px;width:1px;height:26px;background:#dadada;"></div>
<div class="r" style="left:348px;top:600px;width:1px;height:26px;background:#dadada;"></div>
<div class="r" style="left:468px;top:600px;width:1px;height:26px;background:#dadada;"></div>
<div class="r" style="left:568px;top:600px;width:1px;height:26px;background:#dadada;"></div>
<div class="r" style="left:668px;top:600px;width:1px;height:26px;background:#dadada;"></div>
<div class="r" style="left:759px;top:600px;width:1px;height:26px;background:#dadada;"></div>
<div class="r" style="left:839px;top:600px;width:1px;height:26px;background:#dadada;"></div>
<div class="r" style="left:929px;top:600px;width:1px;height:26px;background:#dadada;"></div>
<div class="r" style="left:1058px;top:600px;width:1px;height:26px;background:#dadada;"></div>
<div class="r" style="left:41px;top:625px;width:1018px;height:145px;background:#fefbe6;"></div>
<div class="r" style="left:41px;top:625px;width:1018px;height:1px;background:#f4e4a4;"></div>
<div class="r" style="left:41px;top:626px;width:1px;height:144px;background:#f4e4a4;"></div>
<div class="r" style="left:76px;top:626px;width:1px;height:144px;background:#f4e4a4;"></div>
<div class="r" style="left:247px;top:626px;width:1px;height:144px;background:#f4e4a4;"></div>
<div class="r" style="left:348px;top:626px;width:1px;height:144px;background:#f4e4a4;"></div>
<div class="r" style="left:468px;top:626px;width:1px;height:144px;background:#f4e4a4;"></div>
<div class="r" style="left:568px;top:626px;width:1px;height:144px;background:#f4e4a4;"></div>
<div class="r" style="left:668px;top:626px;width:1px;height:144px;background:#f4e4a4;"></div>
<div class="r" style="left:759px;top:626px;width:1px;height:144px;background:#f4e4a4;"></div>
<div class="r" style="left:839px;top:626px;width:1px;height:144px;background:#f4e4a4;"></div>
<div class="r" style="left:929px;top:626px;width:1px;height:144px;background:#f4e4a4;"></div>
<div class="r" style="left:1058px;top:626px;width:1px;height:144px;background:#f4e4a4;"></div>
<div class="r" style="left:162px;top:721px;width:1px;height:49px;background:#f4e4a4;"></div>
<div class="r" style="left:247px;top:658px;width:221px;height:1px;background:#f4e4a4;"></div>
<div class="r" style="left:247px;top:690px;width:221px;height:1px;background:#f4e4a4;"></div>
<div class="r" style="left:41px;top:721px;width:427px;height:1px;background:#f4e4a4;"></div>
<div class="r" style="left:41px;top:769px;width:1018px;height:1px;background:#f4e4a4;"></div>
<div class="r" style="left:41px;top:770px;width:1018px;height:10px;background:#ffffff;"></div>
<div class="r" style="left:41px;top:770px;width:1px;height:10px;background:#dadada;"></div>
<div class="r" style="left:76px;top:770px;width:1px;height:10px;background:#dadada;"></div>
<div class="r" style="left:247px;top:770px;width:1px;height:10px;background:#dadada;"></div>
<div class="r" style="left:348px;top:770px;width:1px;height:10px;background:#dadada;"></div>
<div class="r" style="left:468px;top:770px;width:1px;height:10px;background:#dadada;"></div>
<div class="r" style="left:568px;top:770px;width:1px;height:10px;background:#dadada;"></div>
<div class="r" style="left:668px;top:770px;width:1px;height:10px;background:#dadada;"></div>
<div class="r" style="left:759px;top:770px;width:1px;height:10px;background:#dadada;"></div>
<div class="r" style="left:839px;top:770px;width:1px;height:10px;background:#dadada;"></div>
<div class="r" style="left:929px;top:770px;width:1px;height:10px;background:#dadada;"></div>
<div class="r" style="left:1058px;top:770px;width:1px;height:10px;background:#dadada;"></div>
<svg class="h" style="left:261px;top:636px" width="12" height="13" viewBox="0 0 12 13"><path d="M.8 11.2V9.2a3.3 3.3 0 0 1 3.3-3.3h3.8a3.3 3.3 0 0 1 3.3 3.3v2a1 1 0 0 1-1 1H1.8a1 1 0 0 1-1-1z" fill="rgba(255,255,255,.6)" stroke="#a8958a" stroke-width="1.15"/><circle cx="6" cy="3.7" r="3" fill="rgba(255,255,255,.6)" stroke="#a8958a" stroke-width="1.15"/></svg>
<svg class="h" style="left:274.26px;top:631.48px" width="63.52" height="19.49"><text x="0" y="15.31" font-size="13" fill="#3a84d8" textLength="61.5" lengthAdjust="spacing">아이스크림</text></svg>
<span class="t" style="left:372.03px;top:637px;font-size:12px;color:#111;letter-spacing:-0.79px;">098−432−1234</span>
<svg class="h" style="left:53px;top:667.5px" width="16" height="16" viewBox="0 0 16 16"><rect x=".5" y=".5" width="13" height="13" rx=".8" fill="#fff" stroke="#4f82c9"/><rect x="2" y="2" width="10" height="3" fill="#9fc5ef"/><rect x="2" y="6" width="3" height="6" fill="#2c5eac"/><rect x="6" y="6" width="6" height="6" fill="#dde4f0"/><circle cx="11.5" cy="11.4" r="3.5" fill="#3d8c1c"/><circle cx="11.5" cy="11.4" r="3.1" fill="none" stroke="#5aa632" stroke-width=".6"/><path d="M11.5 9.2v4.4M9.3 11.4h4.4" stroke="#fff" stroke-width="1.5"/></svg>
<span class="t" style="left:112.15px;top:660px;font-size:12px;color:#111;letter-spacing:-0.72px;">20170719−06312610</span>
<svg class="h" style="left:144.87px;top:672.18px" width="34.97" height="19.49"><text x="0" y="15.31" font-size="13" fill="#f0802c" textLength="33" lengthAdjust="spacing">테스트</text></svg>
<div class="cb" style="left:53px;top:740px"></div>
<svg class="h" style="left:107.87px;top:734.68px" width="25.96" height="19.49"><text x="0" y="15.31" font-size="13" fill="#111" textLength="24" lengthAdjust="spacing">배송</text></svg>
<svg class="h" style="left:189.14px;top:734.67px" width="32.15" height="19.49"><text x="0" y="15.31" font-size="13" fill="#111" textLength="30.2" lengthAdjust="spacing">무통장</text></svg>
<span class="t" style="left:269.17px;top:669px;font-size:12px;color:#111;letter-spacing:0.35px;">supervisor</span>
<svg class="h" style="left:259.3px;top:700px" width="15" height="11" viewBox="0 0 15 11"><circle cx="4.6" cy="2.7" r="2.6" fill="#62bff2"/><path d="M0 10.4V8.2a3.4 3.4 0 0 1 3.4-3.4h2.4a3.4 3.4 0 0 1 3.4 3.4v2.2z" fill="#62bff2"/><path d="M11.3 4v5.6M8.5 6.8h5.6" stroke="#62bff2" stroke-width="1.7"/></svg>
<svg class="h" style="left:276.01px;top:694.68px" width="63.52" height="19.49"><text x="0" y="15.31" font-size="13" fill="#111" textLength="61.5" lengthAdjust="spacing">아이스크림</text></svg>
<span class="t" style="left:399.09px;top:669px;font-size:12px;color:#111;letter-spacing:-0.35px;">1</span>
<svg class="h" style="left:405.41px;top:663.68px" width="13.65" height="19.49"><text x="0" y="15.31" font-size="13" fill="#111">개</text></svg>
<span class="t" style="left:393.15px;top:700px;font-size:12px;color:#111;letter-spacing:-0.68px;">282</span>
<svg class="h" style="left:411.12px;top:694.84px" width="13.32" height="19.49"><text x="0" y="15.31" font-size="13" fill="#111">건</text></svg>
<span class="t" style="left:266.89px;top:740px;font-size:12px;color:#111;letter-spacing:0.06px;">CJ</span>
<svg class="h" style="left:281.67px;top:735.17px" width="50.24" height="19.49"><text x="0" y="15.31" font-size="13" fill="#111" textLength="48.2" lengthAdjust="spacing">대한통운</text></svg>
<span class="t" style="left:364.88px;top:731px;font-size:12px;color:#111;letter-spacing:-0.78px;">774777777777</span>
<svg class="h" style="left:441.25px;top:732.25px" width="11" height="10" viewBox="0 0 11 10"><rect x=".2" y=".2" width="10.6" height="9.6" rx="2" fill="#0d0d0d" stroke="#d8b88a" stroke-width=".4"/><path d="M5.5 2v6M2.5 5h6" stroke="#fff" stroke-width="2"/></svg>
<span class="t" style="left:362.26px;top:748px;font-size:12px;color:#f0608c;letter-spacing:-0.27px;">(</span>
<svg class="h" style="left:365.98px;top:742.54px" width="25.46" height="19.49"><text x="0" y="15.31" font-size="13" fill="#f0608c" textLength="23.5" lengthAdjust="spacing">문의</text></svg>
<span class="t" style="left:389.45px;top:748px;font-size:12px;color:#f0608c;letter-spacing:-0.27px;">:1588−1255)</span>
<span class="t" style="left:502.58px;top:684px;font-size:12px;color:#111;letter-spacing:0.54px;font-weight:bold;">2<i style="margin-right:1.2px">,</i>580</span>
<div class="r" style="left:505px;top:699.25px;width:27px;height:16px;background:#eeeeee;box-sizing:border-box;border:1px solid #9a9a9a;"></div>
<span class="t" style="left:507.1px;top:702px;font-size:10px;color:#6a6a6a;letter-spacing:-0.48px;">2,600</span>
<span class="t" style="left:602.83px;top:684px;font-size:12px;color:#111;letter-spacing:0.48px;font-weight:bold;">2<i style="margin-right:1.2px">,</i>580</span>
<div class="r" style="left:603.75px;top:699.25px;width:29.5px;height:16px;background:#f9e46c;box-sizing:border-box;border:1px solid #e9ca3a;"></div>
<svg class="h" style="left:605.12px;top:700.43px" width="27.74" height="12.77"><text x="0" y="10.03" font-size="9.5" fill="#3a3a3a" textLength="25.7" lengthAdjust="spacing">무통장</text></svg>
<span class="t" style="left:711.29px;top:693px;font-size:11px;color:#f0608c;">−</span>
<span class="t" style="left:796.29px;top:693px;font-size:11px;color:#9cc24a;">−</span>
<span class="t" style="left:881.29px;top:693px;font-size:11px;color:#4ab2ee;">−</span>
<svg class="h" style="left:940.62px;top:676.97px" width="100.18" height="56.79"><text x="0" y="44.62" font-size="38" font-weight="bold" fill="#e2a04c" textLength="98.2" lengthAdjust="spacing">배송중</text></svg>
</div></div>
<div class="fr" style="left:18px;top:624px;width:1065px;height:163px;border-color:#ffc000"></div>
</body></html>
